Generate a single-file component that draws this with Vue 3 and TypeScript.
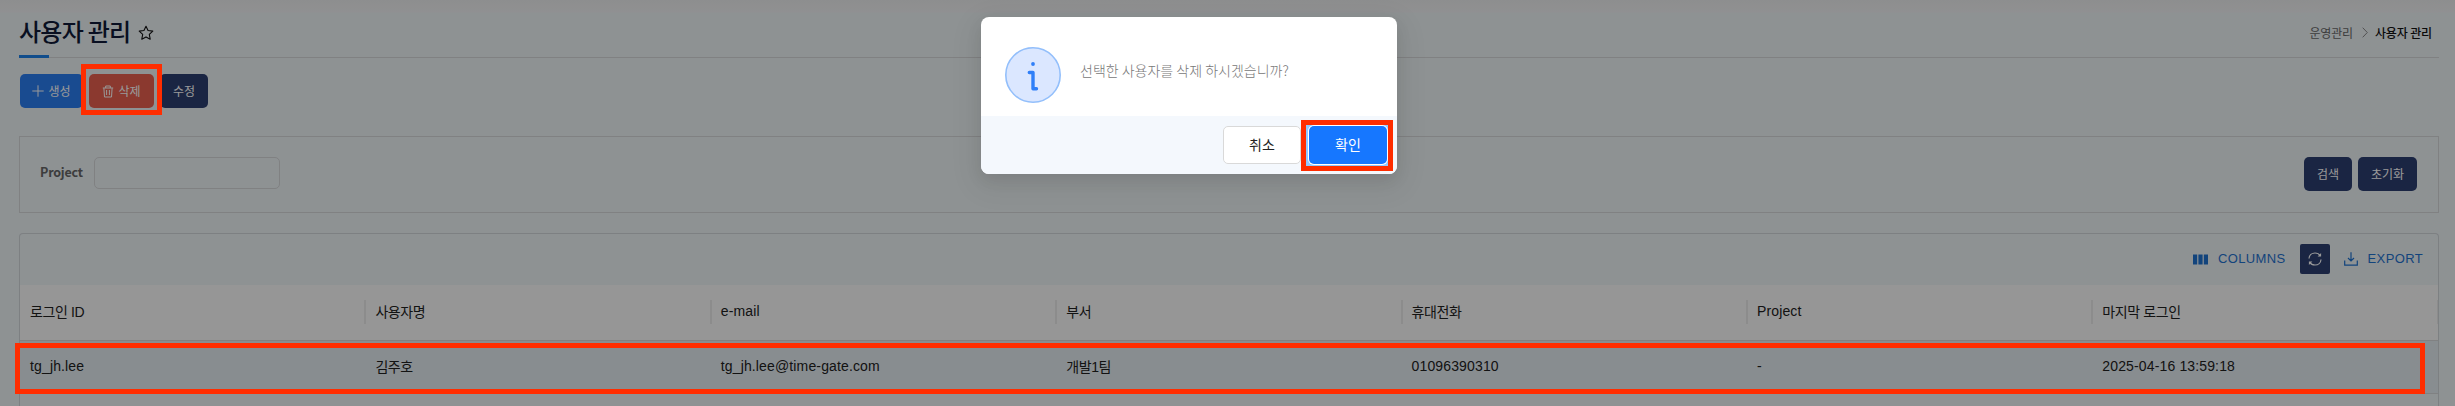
<script setup lang="ts">
interface Column {
  key: string
  title: string
}

const columns: Column[] = [
  { key: 'id', title: '로그인 ID' },
  { key: 'name', title: '사용자명' },
  { key: 'email', title: 'e-mail' },
  { key: 'dept', title: '부서' },
  { key: 'phone', title: '휴대전화' },
  { key: 'project', title: 'Project' },
  { key: 'lastLogin', title: '마지막 로그인' },
]

const rows: Record<string, string>[] = [
  {
    id: 'tg_jh.lee',
    name: '김주호',
    email: 'tg_jh.lee@time-gate.com',
    dept: '개발1팀',
    phone: '01096390310',
    project: '-',
    lastLogin: '2025-04-16 13:59:18',
  },
]

const isHangul = (text: string): boolean => /[가-힣]/.test(text)
</script>

<template>
  <div class="screen">
    <main class="page">
      <header class="page-head">
        <h1>사용자 관리</h1>
        <svg class="star" viewBox="0 0 16 16" width="16" height="16">
          <path d="M8 1.2l2.05 4.35 4.75.6-3.5 3.3.9 4.75L8 11.9l-4.2 2.3.9-4.75-3.5-3.3 4.75-.6z" />
        </svg>
        <nav class="crumbs">
          <span>운영관리</span>
          <svg viewBox="0 0 6 11" width="6" height="11"><path d="M.7.7l4.6 4.8L.7 10.3" /></svg>
          <strong>사용자 관리</strong>
        </nav>
      </header>

      <div class="actions">
        <button class="btn create">
          <svg viewBox="0 0 12 12" width="12" height="12"><path d="M6 .3v11.4M.3 6h11.4" /></svg>
          생성
        </button>
        <div class="marked">
          <button class="btn remove">
            <svg viewBox="0 0 12 13" width="12" height="13">
              <path d="M.8 3h10.4M3.7 3V1h4.6v2M1.9 3.2l.6 8.8h7l.6-8.8M4.6 5v5M7.4 5v5" />
            </svg>
            삭제
          </button>
          <span class="mark"></span>
        </div>
        <button class="btn navy edit">수정</button>
      </div>

      <section class="search">
        <label for="project">Project</label>
        <input id="project" type="text" />
        <div class="search-buttons">
          <button class="btn navy find">검색</button>
          <button class="btn navy reset">초기화</button>
        </div>
      </section>

      <section class="grid">
        <div class="toolbar">
          <svg class="cols" viewBox="0 0 15 11" width="15" height="11">
            <path d="M0 .5h4.2v10H0zM5.4.5h4.2v10H5.4zM10.8.5H15v10h-4.2z" />
          </svg>
          <span class="t-columns">COLUMNS</span>
          <button class="refresh">
            <svg viewBox="0 0 14 14" width="14" height="14">
              <path d="M1 6.5C1.2 3.2 3.8 1 7 1c2.3 0 4.2 1.1 5.3 2.9M13 7.5C12.8 10.8 10.2 13 7 13c-2.3 0-4.2-1.1-5.3-2.9" />
              <path class="tip" d="M13.1.9v3.7H9.6zM.9 13.1V9.4h3.5z" />
            </svg>
          </button>
          <svg class="export" viewBox="0 0 14 14" width="14" height="14">
            <path d="M7 .3v8.5M4 6l3 3 3-3M.7 8.5v4.7h12.6V8.5" />
          </svg>
          <span>EXPORT</span>
        </div>
        <div class="row head">
          <div v-for="c in columns" :key="c.key" class="cell" :class="{ ko: isHangul(c.title) }">
            {{ c.title }}
          </div>
        </div>
        <div v-for="r in rows" :key="r.id" class="row data">
          <div v-for="c in columns" :key="c.key" class="cell" :class="{ ko: isHangul(r[c.key]) }">
            {{ r[c.key] }}
          </div>
        </div>
      </section>
    </main>

    <div class="mask"></div>
    <span class="row-mark"></span>

    <div class="modal" role="dialog">
      <div class="modal-body">
        <svg class="info" viewBox="0 0 56 56" width="56" height="56">
          <circle class="disc" cx="28" cy="28" r="27.2" />
          <circle class="dot" cx="28" cy="17" r="1.9" />
          <path d="M24.3 25.5H28v16.2h3.5" />
        </svg>
        <p>선택한 사용자를 삭제 하시겠습니까?</p>
      </div>
      <div class="modal-foot">
        <button class="cancel">취소</button>
        <div class="ok-wrap"><button class="ok">확인</button></div>
      </div>
    </div>
  </div>
</template>

<style>
body {
  margin: 0;
  overflow: hidden;
}
</style>

<style scoped>
* {
  box-sizing: border-box;
}
.screen {
  position: relative;
  height: 406px;
  overflow: hidden;
  background: linear-gradient(#ecedee 0, #f0f1f3 12px, #edf3f6 13px);
  font-family: 'Noto Sans CJK KR', sans-serif;
}
button {
  font-family: inherit;
  border: 0;
  padding: 0;
  margin: 0;
  white-space: nowrap;
}
svg {
  flex: none;
}
.page {
  padding: 12px 16px 0 19px;
}
.page-head {
  position: relative;
  display: flex;
  align-items: center;
  height: 46px;
  border-bottom: 1px solid #d5d7d9;
}
.page-head::before {
  content: '';
  position: absolute;
  left: 0;
  bottom: -1px;
  width: 30px;
  height: 3px;
  background: #1d80e8;
}
h1 {
  margin: 0 0 8px 0;
  font-size: 24px;
  line-height: 36px;
  font-weight: 500;
  letter-spacing: -0.75px;
  color: #0f1a37;
}
.star {
  margin: -4px 0 0 8px;
  fill: none;
  stroke: #111;
  stroke-width: 1.1;
  stroke-linejoin: round;
}
.crumbs {
  display: flex;
  align-items: center;
  margin: -5px 7px 0 auto;
  font-size: 12px;
  letter-spacing: -0.15px;
  color: #666;
}
.crumbs svg {
  margin: 1px 7px 0 9px;
  fill: none;
  stroke: #888;
}
.crumbs strong {
  font-weight: 500;
  color: #111;
}
.actions {
  display: flex;
  gap: 6px;
  margin: 16px 0 28px 1px;
}
.btn {
  display: flex;
  align-items: center;
  justify-content: center;
  gap: 4px;
  height: 34px;
  border-radius: 5px;
  font-size: 12px;
  line-height: 16px;
  color: #fff;
}
.btn svg {
  fill: none;
  stroke: #fff;
}
.create {
  width: 63px;
  background: #2b7df0;
}
.remove {
  width: 65px;
  background: #e8604f;
}
.navy {
  background: #2c3e70;
}
.edit,
.find {
  width: 48px;
}
.reset {
  width: 59px;
}
.find,
.reset {
  padding-bottom: 1px;
}
.marked {
  position: relative;
}
.mark {
  position: absolute;
  z-index: 3;
  left: -8px;
  top: -10px;
  width: 81px;
  height: 51px;
  border: 5px solid #ff2d00;
}
.search {
  display: flex;
  align-items: center;
  height: 77px;
  padding: 0 21px 0 20px;
  border: 1px solid #d5d7d9;
}
.search label {
  width: 54px;
  margin-top: -6px;
  font-size: 12.5px;
  font-weight: 700;
  letter-spacing: -0.2px;
  color: #666;
}
.search input {
  width: 186px;
  height: 32px;
  margin-top: -3px;
  border: 1px solid #d5d7d9;
  border-radius: 5px;
  background: transparent;
}
.search-buttons {
  display: flex;
  gap: 6px;
  margin: -1px 0 0 auto;
}
.grid {
  margin-top: 20px;
  height: 173px;
  overflow: hidden;
  border: 1px solid #d0d5d9;
  border-bottom: 0;
  border-radius: 4px 4px 0 0;
  font-family: 'Liberation Sans', 'Noto Sans CJK KR', sans-serif;
}
.toolbar {
  display: flex;
  align-items: center;
  justify-content: flex-end;
  height: 51px;
  padding: 0 15px 1px 0;
  font-size: 13px;
  letter-spacing: 0.37px;
  color: #1f72cf;
}
.toolbar span {
  margin-bottom: 2px;
}
.cols {
  fill: #1f72cf;
}
.toolbar .t-columns {
  margin: 0 14px 2px 10px;
}
.refresh {
  display: grid;
  place-items: center;
  width: 30px;
  height: 30px;
  border-radius: 2px;
  background: #2c3e70;
}
.refresh svg,
.export {
  fill: none;
  stroke: #fff;
  stroke-width: 1.2;
}
.refresh .tip {
  fill: #fff;
  stroke: none;
}
.toolbar .export {
  margin: 0 10px 0 14px;
  stroke: #1f72cf;
}
.row {
  display: grid;
  grid-template-columns: repeat(7, 345.4px);
  font-size: 14px;
  color: #212121;
}
.cell {
  position: relative;
  display: flex;
  align-items: center;
  padding: 0 0 3px 10px;
  letter-spacing: 0.14px;
}
.cell.ko {
  letter-spacing: -0.4px;
}
.head {
  height: 56px;
  background: #fafafa;
  border-bottom: 1px solid #d5d7d9;
}
.head .cell::after {
  content: '';
  position: absolute;
  right: -1px;
  top: 15px;
  width: 2px;
  height: 24px;
  background: #eaeaea;
}
.data {
  height: 53px;
  background: #e3ebf0;
  border-bottom: 1px solid #d5d7d9;
}
.data .cell {
  padding-bottom: 2px;
}
.mask {
  position: absolute;
  inset: 0;
  background: rgba(0, 0, 0, 0.4);
}
.row-mark {
  position: absolute;
  left: 15px;
  top: 343px;
  width: 2410px;
  height: 51px;
  border: 5px solid #ff2d00;
}
.modal {
  position: absolute;
  z-index: 4;
  left: 981px;
  top: 17px;
  width: 416px;
  height: 157px;
  border-radius: 8px;
  overflow: hidden;
  background: #fff;
  box-shadow: 0 6px 16px rgba(0, 0, 0, 0.08), 0 9px 28px 8px rgba(0, 0, 0, 0.05);
}
.modal-body {
  display: flex;
  height: 99px;
  padding: 30px 24px 0;
}
.disc {
  fill: #dbe7ff;
  stroke: #93bffb;
  stroke-width: 1.6;
}
.dot {
  fill: #2f7ff8;
}
.info path {
  fill: none;
  stroke: #2f7ff8;
  stroke-width: 3.4;
  stroke-linecap: round;
  stroke-linejoin: round;
}
.modal p {
  margin: 13px 0 0 19px;
  font-size: 14px;
  line-height: 21px;
  font-weight: 300;
  color: #777;
}
.modal-foot {
  display: flex;
  height: 58px;
  padding: 10px 4px 0 242px;
  background: #f4f8fd;
}
.modal-foot button {
  width: 78px;
  height: 38px;
  padding-bottom: 2px;
  border-radius: 5px;
  font-size: 14px;
  line-height: 20px;
}
.cancel {
  border: 1px solid #d9d9d9;
  background: #fff;
  color: #222;
}
.ok-wrap {
  display: flex;
  margin-top: -6px;
  width: 92px;
  height: 51px;
  padding: 1px 0 0 3px;
  border: 5px solid #ff2d00;
  background: #91caff;
  overflow: hidden;
}
.ok {
  flex: none;
  background: #1677ff;
  color: #fff;
  box-shadow: 0 0 0 1px #fff;
}
</style>
